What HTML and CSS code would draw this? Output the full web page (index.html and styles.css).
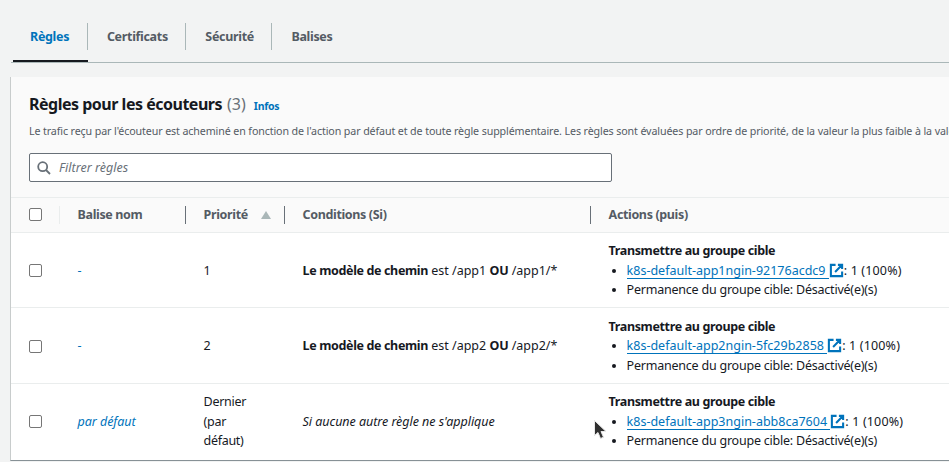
FILE: index.html
```
<!DOCTYPE html>
<html lang="fr">
<head>
<meta charset="utf-8">
<title>Règles pour les écouteurs</title>
<link rel="stylesheet" href="styles.css">
</head>
<body>
<svg class="defs" aria-hidden="true">
  <symbol id="external" viewBox="0 0 16 16">
    <path d="M7 2H2v12h12V9M9.500 2H14v4.500M6.500 9.500L13.500 2.500" fill="none" stroke="currentColor" stroke-width="2.200"/>
  </symbol>
</svg>
<nav class="tabs">
  <a class="tab active"><span class="label rules">Règles</span></a>
  <a class="tab"><span class="label">Certificats</span></a>
  <a class="tab"><span class="label">Sécurité</span></a>
  <a class="tab"><span class="label">Balises</span></a>
</nav>
<main class="panel">
  <header class="panel-header">
    <div class="heading"><h2>Règles pour les écouteurs</h2><span class="count">(3)</span><a class="info">Infos</a></div>
    <p class="description">Le trafic reçu par l'écouteur est acheminé en fonction de l'action par défaut et de toute règle supplémentaire. Les règles sont évaluées par ordre de priorité, de la valeur la plus faible à la valeur</p>
    <div class="search">
      <svg class="search-icon" viewBox="0 0 14 14"><circle cx="5.700" cy="5.700" r="4.500"/><path d="M9 9l4 4"/></svg>
      <span class="placeholder">Filtrer règles</span>
    </div>
  </header>
  <div class="row head">
    <div class="cell select"><span class="box"></span></div>
    <div class="cell">Balise nom</div>
    <div class="cell sorted">Priorité<span class="sort"></span></div>
    <div class="cell">Conditions (Si)</div>
    <div class="cell last">Actions (puis)</div>
  </div>
  <div class="row first">
    <div class="cell select"><span class="box"></span></div>
    <div class="cell"><a>-</a></div>
    <div class="cell">1</div>
    <div class="cell"><p class="condition"><b>Le modèle de chemin</b> est /app1 <b>OU</b> /app1/*</p></div>
    <div class="cell"><div class="action"><b>Transmettre au groupe cible</b>
      <ul><li><a class="target">k8s-default-app1ngin-92176acdc9 </a><svg class="external"><use href="#external"/></svg><span class="weight">: 1 (100%)</span></li><li>Permanence du groupe cible: Désactivé(e)(s)</li></ul></div></div>
  </div>
  <div class="row second">
    <div class="cell select"><span class="box"></span></div>
    <div class="cell"><a>-</a></div>
    <div class="cell">2</div>
    <div class="cell"><p class="condition"><b>Le modèle de chemin</b> est /app2 <b>OU</b> /app2/*</p></div>
    <div class="cell"><div class="action"><b>Transmettre au groupe cible</b>
      <ul><li><a class="target">k8s-default-app2ngin-5fc29b2858 </a><svg class="external"><use href="#external"/></svg><span class="weight">: 1 (100%)</span></li><li>Permanence du groupe cible: Désactivé(e)(s)</li></ul></div></div>
  </div>
  <div class="row third">
    <div class="cell select"><span class="box"></span></div>
    <div class="cell"><a class="default">par défaut</a></div>
    <div class="cell"><p class="priority">Dernier<br>(par<br>défaut)</p></div>
    <div class="cell"><i>Si aucune autre règle ne s'applique</i></div>
    <div class="cell"><div class="action"><b>Transmettre au groupe cible</b>
      <ul><li><a class="target">k8s-default-app3ngin-abb8ca7604 </a><svg class="external"><use href="#external"/></svg><span class="weight">: 1 (100%)</span></li><li>Permanence du groupe cible: Désactivé(e)(s)</li></ul></div></div>
  </div>
</main>
<svg class="cursor" viewBox="0 0 14 22"><path d="M1.500 1.500v15l3.500-3 2.500 6 3-1.300-2.500-5.700h5z"/></svg>
</body>
</html>
```
FILE: styles.css
```
* { box-sizing: border-box; }
body {
  margin: 0;
  height: 462px;
  overflow: hidden;
  background: #f2f3f3;
  color: #16191f;
  font: 12.5px/19.5px "Noto Sans", sans-serif;
  letter-spacing: -0.22px;
}
p, h2, ul { margin: 0; padding: 0; }
b { letter-spacing: -0.36px; }
a { color: #0073bb; }
.defs { display: none; }

.tabs {
  display: flex;
  height: 63px;
  margin-left: 11px;
  padding-left: 2px;
  border-bottom: 1px solid #aab7b8;
}
.tab {
  display: flex;
  height: 62px;
  padding-top: 23px;
  color: #545b64;
  font-weight: 700;
  letter-spacing: -0.32px;
}
.tab .label {
  height: 27px;
  padding: 0 17.500px 0 19px;
  line-height: 27px;
  border-right: 1px solid #aab7b8;
}
.tab .rules { padding: 0 17.800px 0 17px; }
.tab:last-child .label { border-right: 0; }
.tab.active { color: #0073bb; border-bottom: 2px solid #16191f; }

.panel {
  margin: 14px 0 0 10px;
  border-left: 1px solid #c8cccc;
  border-bottom: 1px solid #879196;
  background: #fff;
}
.panel-header {
  height: 121px;
  padding: 15px 0 0 18px;
  background: #fafafa;
  border-bottom: 1px solid #eaeded;
}
.heading { display: flex; align-items: baseline; height: 24px; line-height: 24px; }
h2 { font-size: 16px; letter-spacing: -0.49px; }
.count { margin-left: 5px; font-size: 16px; color: #687078; letter-spacing: 0; }
.info { margin-left: 8px; font-size: 10.5px; font-weight: 700; letter-spacing: -0.25px; }
.description {
  height: 37px;
  padding-top: 5px;
  overflow: hidden;
  white-space: nowrap;
  font-size: 10.7px;
  line-height: 20px;
  letter-spacing: -0.12px;
  color: #545b64;
}
.search {
  display: flex;
  align-items: center;
  width: 583px;
  height: 29px;
  padding-left: 7px;
  background: #fff;
  border: 1px solid #687078;
  border-radius: 2px;
}
.search-icon {
  width: 14px;
  height: 14px;
  margin-top: 1px;
  fill: none;
  stroke: #687078;
  stroke-width: 1.8;
}
.placeholder { margin-left: 8px; color: #687078; font-style: italic; letter-spacing: 0.02px; }

.row {
  display: grid;
  grid-template-columns: 49px 126px 99px 306px 1fr;
  align-items: center;
  height: 75px;
  border-bottom: 1px solid #eaeded;
}
.row.first { padding-top: 1px; }
.row.second { height: 76px; padding-top: 1px; }
.row.third { height: 76px; padding-bottom: 1px; border-bottom: 0; }
.cell { padding-left: 17.600px; white-space: nowrap; }
.row.head {
  height: 35px;
  background: #fafafa;
  color: #545b64;
  font-weight: 700;
  letter-spacing: -0.36px;
}
.head .cell { height: 18px; line-height: 18px; border-right: 1px solid #687078; }
.head .select { border-color: #eaeded; }
.head .last { border: 0; }
.select { display: flex; align-items: center; padding-left: 18px; }
.head .box { margin-top: -1px; }
.box {
  width: 13px;
  height: 13px;
  background: #fff;
  border: 1px solid #767676;
  border-radius: 2px;
}
.sorted { display: flex; align-items: center; }
.sort {
  margin-left: 13px;
  border: 5px solid transparent;
  border-top: 0;
  border-bottom: 8px solid #aab7b8;
}
.default { font-style: italic; letter-spacing: -0.05px; }
.condition { letter-spacing: 0; }
.condition b:last-child { letter-spacing: -0.2px; }
.priority { letter-spacing: -0.3px; }
i { letter-spacing: -0.04px; }
.action ul { padding-left: 18px; }
.target {
  display: inline-block;
  height: 18px;
  line-height: 19px;
  border-bottom: 1px solid #0073bb;
  letter-spacing: 0;
  white-space: pre;
}
.external { width: 15px; height: 15px; vertical-align: -3px; color: #0073bb; }
.weight { letter-spacing: 0.15px; }
.cursor {
  position: absolute;
  left: 593px;
  top: 419px;
  width: 14px;
  height: 22px;
  fill: #303030;
  stroke: #e8e8e8;
  stroke-width: 1;
}
```
